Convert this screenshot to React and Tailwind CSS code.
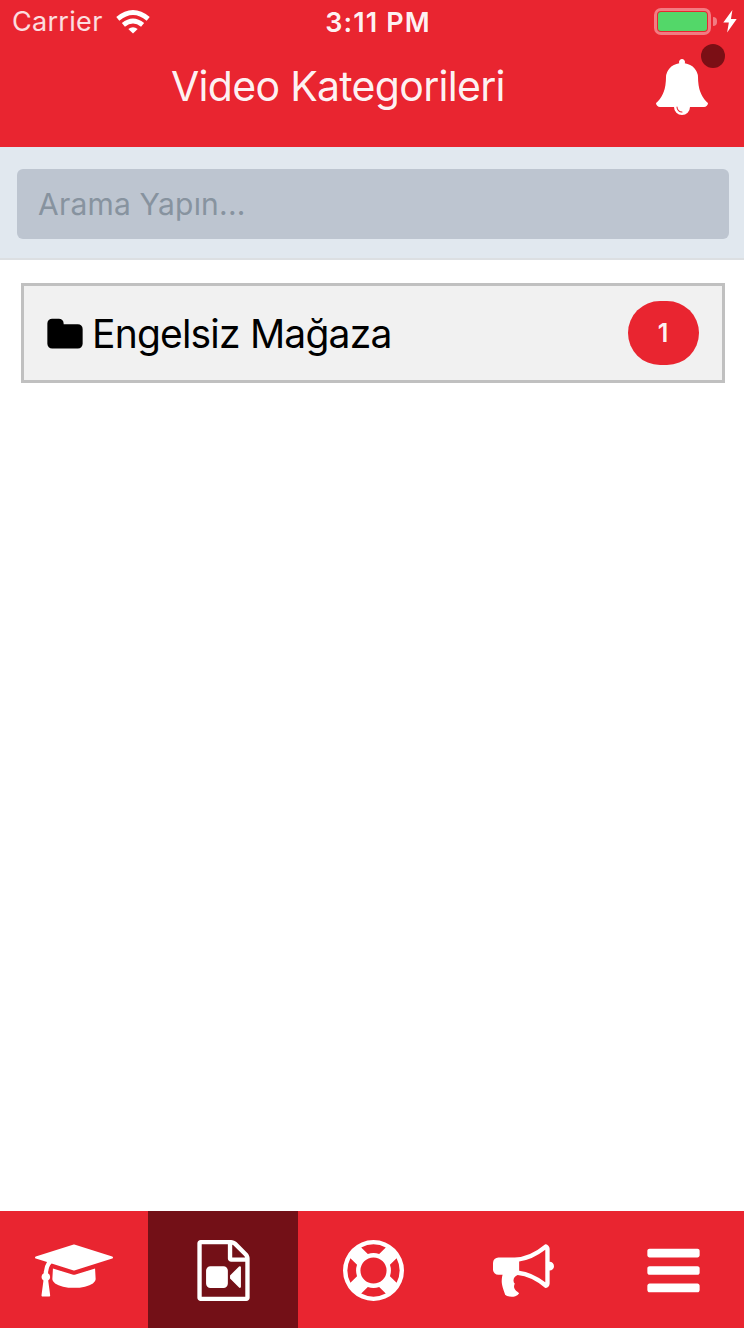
const icons = {
  bell: 'M912 1696q0-16-16-16-59 0-101.500-42.500t-42.500-101.500q0-16-16-16t-16 16q0 73 51.500 124.500t124.500 51.500q16 0 16-16zm816-288q0 52-38 90t-90 38h-448q0 106-75 181t-181 75-181-75-75-181h-448q-52 0-90-38t-38-90q50-42 91-88t85-119.500 74.500-158.500 50-206 19.500-260q0-152 117-282.500t307-158.500q-8-19-8-39 0-40 28-68t68-28 68 28 28 68q0 20-8 39 190 28 307 158.500t117 282.500q0 139 19.500 260t50 206 74.500 158.500 85 119.500 91 88z',
  folder: 'M1728 608v704q0 92-66 158t-158 66h-1216q-92 0-158-66t-66-158v-960q0-92 66-158t158-66h320q92 0 158 66t66 158v32h672q92 0 158 66t66 158z',
  graduation: 'M1774 836l18 316q4 69-82 128t-235 93.500-323 34.500-323-34.500-235-93.500-82-128l18-316 574 181q22 7 48 7t48-7zm530-324q0 23-22 31l-1120 352q-4 1-10 1t-10-1l-652-206q-43 34-71 111.500t-34 178.500q63 36 63 109 0 69-58 107l58 433q2 14-8 25-9 11-24 11h-192q-15 0-24-11-10-11-8-25l58-433q-58-38-58-107 0-73 65-111 11-207 98-330l-333-104q-22-8-22-31t22-31l1120-352q4-1 10-1t10 1l1120 352q22 8 22 31z',
  video: 'M1596 380q28 28 48 76t20 88v1152q0 40-28 68t-68 28h-1344q-40 0-68-28t-28-68v-1600q0-40 28-68t68-28h896q40 0 88 20t76 48zm-444-244v376h376q-10-29-22-41l-313-313q-12-12-41-22zm384 1528v-1024h-416q-40 0-68-28t-28-68v-416h-768v1536h1280zm-640-896q52 0 90 38t38 90v384q0 52-38 90t-90 38h-384q-52 0-90-38t-38-90v-384q0-52 38-90t90-38h384zm492 2q20 8 20 30v576q0 22-20 30-8 2-12 2-14 0-23-9l-265-266v-90l265-266q9-9 23-9 4 0 12 2z',
  support: 'M896 0q182 0 348 71t286 191 191 286 71 348-71 348-191 286-286 191-348 71-348-71-286-191-191-286-71-348 71-348 191-286 286-191 348-71zm0 128q-190 0-361 90l194 194q82-28 167-28t167 28l194-194q-171-90-361-90zm-678 1129l194-194q-28-82-28-167t28-167l-194-194q-90 171-90 361t90 361zm678 407q190 0 361-90l-194-194q-82 28-167 28t-167-28l-194 194q171 90 361 90zm0-384q159 0 271.500-112.500t112.500-271.500-112.500-271.500-271.500-112.500-271.500 112.500-112.500 271.500 112.500 271.500 271.500 112.500zm484-217l194 194q90-171 90-361t-90-361l-194 194q28 82 28 167t-28 167z',
  bullhorn: 'M1664 640q53 0 90.500 37.500t37.500 90.500-37.500 90.500-90.500 37.500v384q0 52-38 90t-90 38q-417-347-812-380-58 19-91 66t-31 100.500 40 92.500q-20 33-23 65.500t6 58 33.500 55 48 50 61.500 50.500q-29 58-111.500 83t-168.500 11.500-132-55.500q-7-23-29.500-87.500t-32-94.500-23-89-15-101 3.500-98.500 22-110.500h-122q-66 0-113-47t-47-113v-192q0-66 47-113t113-47h480q435 0 896-384 52 0 90 38t38 90v384zm-128 604v-954q-394 302-768 343v270q377 42 768 341z',
  bars: 'M1664 1344v128q0 26-19 45t-45 19h-1408q-26 0-45-19t-19-45v-128q0-26 19-45t45-19h1408q26 0 45 19t19 45zm0-512v128q0 26-19 45t-45 19h-1408q-26 0-45-19t-19-45v-128q0-26 19-45t45-19h1408q26 0 45 19t19 45zm0-512v128q0 26-19 45t-45 19h-1408q-26 0-45-19t-19-45v-128q0-26 19-45t45-19h1408q26 0 45 19t19 45z',
};

const tabs = [
  { icon: 'graduation', label: 'Eğitimler' },
  { icon: 'video', label: 'Videolar', active: true },
  { icon: 'support', label: 'Destek' },
  { icon: 'bullhorn', label: 'Duyurular' },
  { icon: 'bars', label: 'Menü' },
];

const Icon = ({ name, className }) => (
  <svg
    viewBox={name === 'graduation' ? '0 0 2304 1792' : '0 0 1792 1792'}
    fill="currentColor"
    className={className}
    aria-hidden="true"
  >
    <path d={icons[name]} />
  </svg>
);

const StatusBar = () => (
  <div className="grid h-[43px] grid-cols-3 items-center pl-[12px] pr-[7px] leading-none">
    <div className="flex items-center gap-[13px]">
      <span className="text-[27px] tracking-[0.3px] text-white/85">Carrier</span>
      <svg viewBox="0 0 34 24" className="h-[24px] w-[34px]" aria-hidden="true">
        <g fill="none" stroke="white" strokeWidth="4.800">
          <path d="M1.800 8.800Q17-3.800 32.200 8.800" />
          <path d="M7.400 14.900Q17 6.900 26.600 14.900" />
        </g>
        <path d="M12.300 19.100Q17 15.300 21.700 19.100L17 23.600z" fill="white" />
      </svg>
    </div>
    <span className="pl-[7px] pt-px text-center text-[27px] font-semibold tracking-[1.1px] text-white/95">3:11 PM</span>
    <div className="flex items-center justify-end">
      <div className="h-[27px] w-[57px] rounded-[7px] border-3 border-white/40 p-px">
        <div className="h-full rounded-[3px] bg-[#53d769]" />
      </div>
      <div className="ml-[2px] h-[9px] w-[4px] rounded-r-full bg-white/40" />
      <svg viewBox="0 0 14 24" className="ml-[6px] h-[23px] w-[14px]" aria-hidden="true">
        <path d="M9.500 0L0 13h5.800L4 23.500 14 9.500H8z" fill="white" />
      </svg>
    </div>
  </div>
);

const Header = () => (
  <header className="h-[147px] bg-[#e92530] text-white">
    <StatusBar />
    <div className="grid h-[88px] grid-cols-[171px_1fr_auto] pr-[36px]">
      <h1 className="col-start-2 whitespace-nowrap text-[41px] leading-[86px] tracking-[-0.7px] text-white/95">Video Kategorileri</h1>
      <button className="relative mt-[16px] h-[56px] w-[52px]" aria-label="Bildirimler">
        <Icon name="bell" className="-ml-[2px] h-[56px] w-[56px] max-w-none" />
        <span className="absolute -right-[17px] -top-[15px] size-6 rounded-full bg-[#7b0f15]" />
      </button>
    </div>
  </header>
);

const SearchBar = () => (
  <div className="h-[113px] border-b-2 border-[#dcdfe2] bg-[#e1e8ef] px-[15px] pt-[22px] pl-[17px]">
    <input
      type="text"
      placeholder="Arama Yapın..."
      className="block h-[70px] w-full rounded-[6px] bg-[#bdc5d0] px-[21px] pb-px text-[30px] tracking-[0.2px] outline-none placeholder:text-[#87939f]"
    />
  </div>
);

const CategoryRow = ({ title, count }) => (
  <div className="flex h-[100px] items-center border-3 border-[#c0c0c0] bg-[#f1f1f1] pl-[22px] pr-[23px]">
    <Icon name="folder" className="mt-[3px] size-[38px]" />
    <span className="ml-[8px] flex-1 pt-px text-[39px] leading-none tracking-[-0.8px] text-black">{title}</span>
    <span className="flex h-[64px] w-[71px] items-center justify-center rounded-[32px] bg-[#e92530] pt-[2px] pr-px text-[25px] font-semibold text-white/95">
      {count}
    </span>
  </div>
);

const TabBar = () => (
  <nav className="h-[117px] overflow-hidden bg-[#e92530]">
    <div className="-ml-[2px] grid h-full w-[750px] grid-cols-5 text-white">
      {tabs.map((tab) => (
        <button
          key={tab.icon}
          aria-label={tab.label}
          className={`flex items-center justify-center pt-px ${tab.active ? 'bg-[#731017]' : ''}`}
        >
          <Icon name={tab.icon} className={tab.icon === 'graduation' ? 'ml-px h-[61px] w-[78px]' : 'size-[61px]'} />
        </button>
      ))}
    </div>
  </nav>
);

export default function App() {
  return (
    <div className="flex h-[1328px] w-[744px] flex-col overflow-hidden bg-white font-['Inter','Liberation_Sans',sans-serif]">
      <Header />
      <SearchBar />
      <main className="flex-1 pl-[21px] pr-[19px] pt-[23px]">
        <CategoryRow title="Engelsiz Mağaza" count={1} />
      </main>
      <TabBar />
    </div>
  );
}
